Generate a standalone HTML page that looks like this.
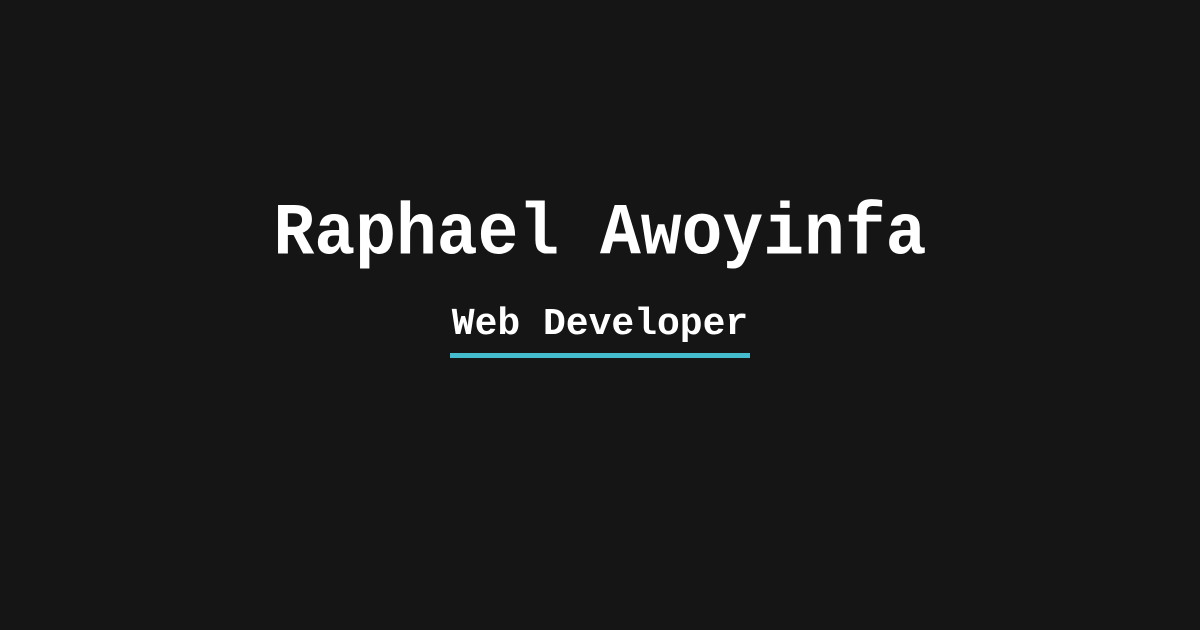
<!DOCTYPE html>
<html><head><style>
html,body{margin:0;width:1200px;height:630px;background:#151515;overflow:hidden}
.t{position:absolute;left:0;width:1200px;text-align:center;color:#fff;font-family:"Liberation Mono",monospace;font-weight:bold;white-space:nowrap}
#a{top:195px;font-size:68px;line-height:80px;transform:scaleY(1.08)}
#b{top:303px;font-size:38px;line-height:44px}
#u{position:absolute;left:450px;top:353px;width:300px;height:5px;background:#45bccd}
</style></head><body>
<div class="t" id="a">Raphael Awoyinfa</div>
<div class="t" id="b">Web Developer</div>
<div id="u"></div>
</body></html>
